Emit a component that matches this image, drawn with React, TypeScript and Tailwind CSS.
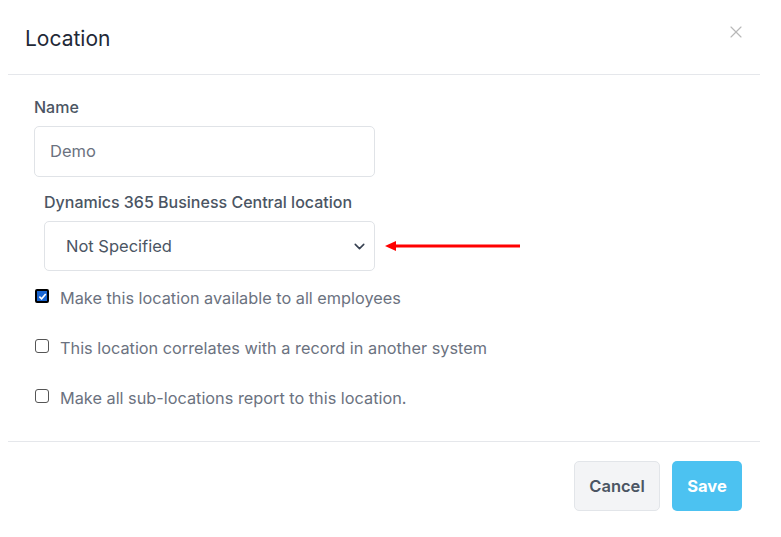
import { ChevronDown, X } from "lucide-react"

const options = [
  { label: "Make this location available to all employees", checked: true },
  { label: "This location correlates with a record in another system", checked: false },
  { label: "Make all sub-locations report to this location.", checked: false },
]

function Box({ checked }: { checked: boolean }) {
  if (checked) {
    return (
      <span className="flex h-[14px] w-[14px] shrink-0 items-center justify-center rounded-[2px] border-2 border-black bg-[#1a66d2]">
        <svg viewBox="0 0 10 10" className="h-[9px] w-[9px]">
          <path d="M1.5 5.2 4 7.6 8.6 2.2" fill="none" stroke="white" strokeWidth="1.8" />
        </svg>
      </span>
    )
  }
  return <span className="block h-[14px] w-[14px] shrink-0 rounded-[3px] border border-[#555] bg-white" />
}

export default function App() {
  return (
    <div className="min-h-screen w-[781px] bg-white font-['Inter',sans-serif]">
      <div className="ml-2 w-[752px]">
        {/* header */}
        <div className="flex h-[75px] items-start justify-between border-b border-[#e5e7eb] pl-[17px] pr-[14px] pt-[26px]">
          <h2 className="text-[21px] leading-[26px] text-[#1f2937]">Location</h2>
          <X className="-mt-1 h-5 w-5 text-[#b8b8b8]" strokeWidth={1.4} />
        </div>

        {/* body */}
        <div className="border-b border-[#e5e7eb] pb-[33px] pl-[26px] pt-[22px]">
          <label className="block text-[16px] font-medium leading-5 text-[#4b5563]">Name</label>
          <div className="mt-[9px] flex h-[51px] w-[341px] items-center rounded-[5px] border border-[#e0e3e7] pl-[15px] text-[16.5px] text-[#6b7280]">
            Demo
          </div>

          <div className="pl-[10px] pt-[15px]">
            <label className="block text-[16px] font-medium leading-5 text-[#4b5563]">
              Dynamics 365 Business Central location
            </label>
            <div className="mt-[9px] flex items-center">
              <div className="flex h-[50px] w-[331px] items-center justify-between rounded-[5px] border border-[#e0e3e7] pl-[21px] pr-[6px] text-[16.5px] text-[#4b5563]">
                <span>Not Specified</span>
                <ChevronDown className="h-[17px] w-[17px] text-[#374151]" strokeWidth={2.2} />
              </div>
              <svg viewBox="0 0 140 12" className="ml-[9px] h-3 w-[140px]">
                <path d="M10 6H136" stroke="#ff0000" strokeWidth="3" />
                <path d="M1 6 12 1V11Z" fill="#ff0000" />
              </svg>
            </div>
          </div>

          <div className="mt-[17px] flex flex-col gap-[30px] pl-px">
            {options.map((o) => (
              <div key={o.label} className="flex items-start gap-[11px]">
                <span className="block pt-[1px]">
                  <Box checked={o.checked} />
                </span>
                <span className="text-[16.3px] leading-5 text-[#6b7280]">{o.label}</span>
              </div>
            ))}
          </div>
        </div>

        {/* footer */}
        <div className="flex justify-end gap-3 pr-[18px] pt-[19px]">
          <button className="h-[50px] w-[86px] rounded-[5px] border border-[#e2e5e9] bg-[#f3f4f6] text-[16.5px] font-semibold text-[#4b5563]">
            Cancel
          </button>
          <button className="h-[50px] w-[70px] rounded-[5px] bg-[#4cc2f1] text-[16.5px] font-bold text-white">
            Save
          </button>
        </div>
      </div>
    </div>
  )
}
